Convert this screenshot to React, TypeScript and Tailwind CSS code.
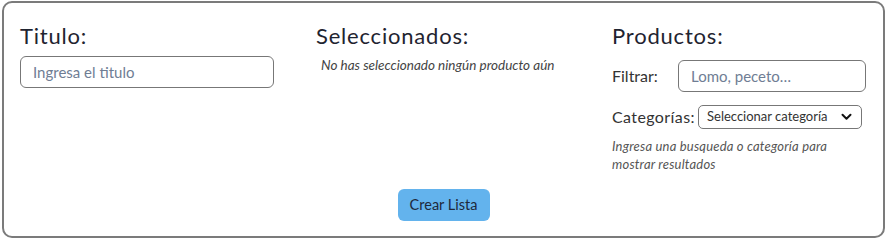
import React from "react";

export default function App() {
  return (
    <div className="w-[888px] h-[242px] bg-white pt-px pl-[2px]" style={{ fontFamily: "Lato, 'Open Sans', sans-serif" }}>
      <div className="w-[883px] h-[237px] border-2 border-[#7b7b7b] rounded-[10px] flex flex-col px-[16px] pt-[18px]">
        <div className="grid grid-cols-[256px_256px_256px] gap-x-[40px] h-[168px]">
          <div className="flex flex-col">
            <h2 className="text-[22px] leading-[30px] tracking-[0.8px] text-[#1f2430]">Titulo:</h2>
            <input
              className="mt-[5px] w-[254px] h-[32px] border border-[#777] rounded-[6px] px-[12px] text-[15px] text-[#333] placeholder:text-[#6f7d94] outline-none"
              placeholder="Ingresa el titulo"
            />
          </div>
          <div className="flex flex-col">
            <h2 className="text-[22px] leading-[30px] tracking-[0.8px] text-[#1f2430]">Seleccionados:</h2>
            <p className="mt-[4px] pl-[5px] text-[13.5px] italic text-[#444]">No has seleccionado ningún producto aún</p>
          </div>
          <div className="flex flex-col">
            <h2 className="text-[22px] leading-[30px] tracking-[0.8px] text-[#1f2430]">Productos:</h2>
            <div className="mt-[9px] flex items-center">
              <span className="text-[16px] text-[#333] w-[66px]">Filtrar:</span>
              <input
                className="w-[188px] h-[32px] border border-[#777] rounded-[6px] px-[12px] text-[15px] text-[#333] placeholder:text-[#6f7d94] outline-none"
                placeholder="Lomo, peceto…"
              />
            </div>
            <div className="mt-[13px] flex items-center">
              <span className="text-[16px] tracking-[0.4px] text-[#333] w-[86px]">Categorías:</span>
              <div className="w-[164px] h-[24px] border border-[#777] rounded-[5px] flex items-center justify-between pl-[8px] pr-[9px]">
                <span className="text-[13px] text-[#333]">Seleccionar categoría</span>
                <svg width="11" height="8" viewBox="0 0 11 8" fill="none">
                  <path d="M1.5 1.8 L5.5 5.8 L9.5 1.8" stroke="#111" strokeWidth="2" strokeLinecap="round" strokeLinejoin="round" />
                </svg>
              </div>
            </div>
            <p className="mt-[8px] w-[236px] text-[13px] leading-[18px] tracking-[0.2px] italic text-[#555]">
              Ingresa una busqueda o categoría para mostrar resultados
            </p>
          </div>
        </div>
        <div className="flex justify-center">
          <button className="w-[92px] h-[32px] bg-[#63b3ed] rounded-[6px] text-[14.5px] text-[#1e293b]">Crear Lista</button>
        </div>
      </div>
    </div>
  );
}
